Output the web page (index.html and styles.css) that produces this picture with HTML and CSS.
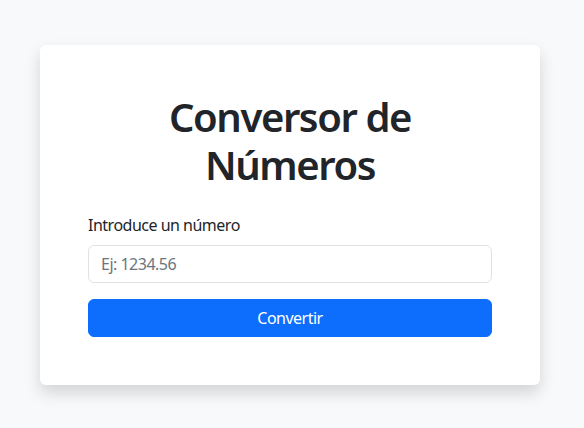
FILE: index.html
```html
<!DOCTYPE html>
<html lang="es">
<head>
<meta charset="utf-8">
<title>Conversor de Números</title>
<link rel="stylesheet" href="styles.css">
</head>
<body>
<main class="page">
  <div class="card">
    <h1 class="title">Conversor de Números</h1>
    <form class="form">
      <label class="label" for="num">Introduce un número</label>
      <input class="input" id="num" type="text" placeholder="Ej: 1234.56">
      <button class="btn" type="button">Convertir</button>
    </form>
  </div>
</main>
</body>
</html>
```
FILE: styles.css
```css
* { box-sizing: border-box; }
html, body { margin: 0; padding: 0; }
body {
  background: #f8f9fa;
  font-family: "Noto Sans", "Open Sans", sans-serif;
  font-size: 16px;
  line-height: 1.5;
  color: #212529;
  letter-spacing: -0.5px;
}
.page {
  padding: 45px 40px;
  display: flex;
  justify-content: flex-start;
}
.card {
  width: 500px;
  background: #fff;
  border-radius: 6px;
  box-shadow: 0 8px 16px rgba(0,0,0,.15);
  padding: 48px;
}
.title {
  margin: 0 0 24px;
  font-size: 40px;
  font-weight: 600;
  line-height: 1.2;
  letter-spacing: -1.4px;
  text-align: center;
  color: #212529;
  padding: 0 40px;
}
.form { display: flex; flex-direction: column; }
.label { margin-bottom: 8px; font-size: 16px; }
.input {
  height: 38px;
  padding: 6px 12px;
  font: inherit;
  letter-spacing: -0.5px;
  color: #212529;
  border: 1px solid #dee2e6;
  border-radius: 6px;
  margin-bottom: 16px;
  outline: none;
}
.input::placeholder { color: #6c757d; opacity: 1; }
.btn {
  height: 38px;
  font: inherit;
  letter-spacing: -0.5px;
  color: #fff;
  background: #0d6efd;
  border: 1px solid #0d6efd;
  border-radius: 6px;
  padding: 6px 12px;
  cursor: pointer;
}
```
